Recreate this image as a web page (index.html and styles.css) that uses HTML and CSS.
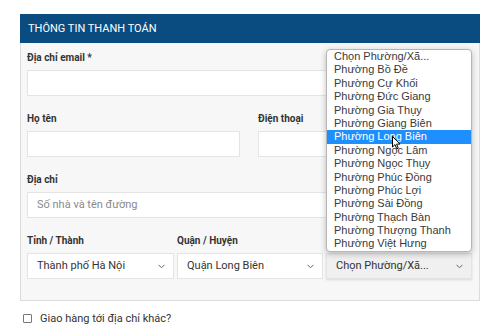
FILE: index.html
```html
<!DOCTYPE html>
<html lang="vi">
<head>
  <meta charset="UTF-8">
  <title>Thông tin thanh toán</title>
  <link rel="stylesheet" href="styles.css">
</head>
<body>
  <div class="checkout">
    <div class="panel">
      <div class="panel-head">THÔNG TIN THANH TOÁN</div>
      <div class="panel-body">
        <div class="field">
          <label>Địa chỉ email *</label>
          <div class="input"></div>
        </div>
        <div class="row two">
          <div class="field">
            <label>Họ tên</label>
            <div class="input"></div>
          </div>
          <div class="field">
            <label>Điện thoại</label>
            <div class="input"></div>
          </div>
        </div>
        <div class="field">
          <label>Địa chỉ</label>
          <div class="input placeholder">Số nhà và tên đường</div>
        </div>
        <div class="row three">
          <div class="field">
            <label>Tỉnh / Thành</label>
            <div class="input select">Thành phố Hà Nội
              <svg class="chev" width="7" height="5" viewBox="0 0 7 5"><polyline points="0.5,0.8 3.5,3.8 6.5,0.8" fill="none" stroke="#666" stroke-width="1"/></svg>
            </div>
          </div>
          <div class="field">
            <label>Quận / Huyện</label>
            <div class="input select">Quận Long Biên
              <svg class="chev" width="7" height="5" viewBox="0 0 7 5"><polyline points="0.5,0.8 3.5,3.8 6.5,0.8" fill="none" stroke="#666" stroke-width="1"/></svg>
            </div>
          </div>
          <div class="field">
            <label>&nbsp;</label>
            <div class="input select open">Chọn Phường/Xã...
              <svg class="chev" width="7" height="5" viewBox="0 0 7 5"><polyline points="0.5,0.8 3.5,3.8 6.5,0.8" fill="none" stroke="#666" stroke-width="1"/></svg>
            </div>
          </div>
        </div>
      </div>
    </div>
    <div class="ship-other">
      <span class="box"></span>
      <span>Giao hàng tới địa chỉ khác?</span>
    </div>

    <ul class="dropdown">
      <li>Chọn Phường/Xã...</li>
      <li>Phường Bồ Đề</li>
      <li>Phường Cự Khối</li>
      <li>Phường Đức Giang</li>
      <li>Phường Gia Thụy</li>
      <li>Phường Giang Biên</li>
      <li class="hover">Phường Long Biên</li>
      <li>Phường Ngọc Lâm</li>
      <li>Phường Ngọc Thụy</li>
      <li>Phường Phúc Đồng</li>
      <li>Phường Phúc Lợi</li>
      <li>Phường Sài Đồng</li>
      <li>Phường Thạch Bàn</li>
      <li>Phường Thượng Thanh</li>
      <li>Phường Việt Hưng</li>
    </ul>
    <svg class="cursor" width="9" height="14" viewBox="0 0 9 14"><path d="M0.5,0.5 L0.5,11 L3,8.6 L4.8,12.8 L6.3,12.2 L4.6,8.1 L8,8.1 Z" fill="#fff" stroke="#000" stroke-width="1" stroke-linejoin="round"/></svg>
  </div>
</body>
</html>
```

FILE: styles.css
```css
body {
  margin: 0;
  background: #fff;
  font-family: Roboto, "Noto Sans", sans-serif;
  color: #333;
}
.checkout {
  position: relative;
  padding: 14px 20px 0;
}
.panel {
  width: 458px;
  border: 1px solid #dcdcdc;
  border-top: none;
  background: #f7f7f7;
}
.panel-head {
  height: 29px;
  line-height: 30px;
  margin: 0 -1px;
  padding-left: 8px;
  background: #0a4c80;
  color: #fff;
  font-size: 11px;
}
.panel-body {
  padding: 8px 8px 21px 6px;
}
.field {
  margin-bottom: 16px;
}
.row .field {
  margin-bottom: 0;
}
.row {
  margin-bottom: 16px;
}
.row:last-child,
.panel-body > .field:last-child {
  margin-bottom: 0;
}
.row.two {
  display: grid;
  grid-template-columns: 213px 213px;
  column-gap: 18px;
}
.row.three {
  display: grid;
  grid-template-columns: 147px 146px 146px;
  column-gap: 3px;
}
label {
  display: block;
  height: 14px;
  line-height: 14px;
  margin-bottom: 5px;
  font-size: 10px;
  font-weight: 700;
  color: #333;
}
.input {
  box-sizing: border-box;
  height: 26px;
  line-height: 24px;
  padding: 0 9px;
  background: #fff;
  border: 1px solid #e4e4e4;
  font-size: 11px;
  color: #333;
}
.placeholder {
  color: #8a8a8a;
}
.select {
  position: relative;
}
.select .chev {
  position: absolute;
  right: 8px;
  top: 10px;
}
.select.open {
  background: #f0f0f0;
  box-shadow: 0 1px 2px rgba(0, 0, 0, 0.12);
}
.ship-other {
  display: flex;
  align-items: center;
  gap: 8px;
  padding: 11px 0 0 3px;
  font-size: 11px;
  color: #333;
}
.ship-other .box {
  width: 7px;
  height: 7px;
  border: 1px solid #777;
  border-radius: 1px;
  background: #fff;
}
.dropdown {
  position: absolute;
  top: 49px;
  left: 326px;
  width: 146px;
  box-sizing: border-box;
  margin: 0;
  padding: 0;
  list-style: none;
  background: #fff;
  border: 1px solid #b5b5b5;
  border-radius: 4px;
  box-shadow: 0 2px 6px rgba(0, 0, 0, 0.25);
  font-family: "Liberation Sans", Arial, sans-serif;
  font-size: 11px;
  color: #3a3a3a;
}
.dropdown li {
  height: 13.4px;
  line-height: 13.4px;
  padding-left: 7px;
  white-space: nowrap;
}
.dropdown li.hover {
  background: #1e8fff;
  color: #fff;
}
.cursor {
  position: absolute;
  top: 136px;
  left: 392px;
}
```
